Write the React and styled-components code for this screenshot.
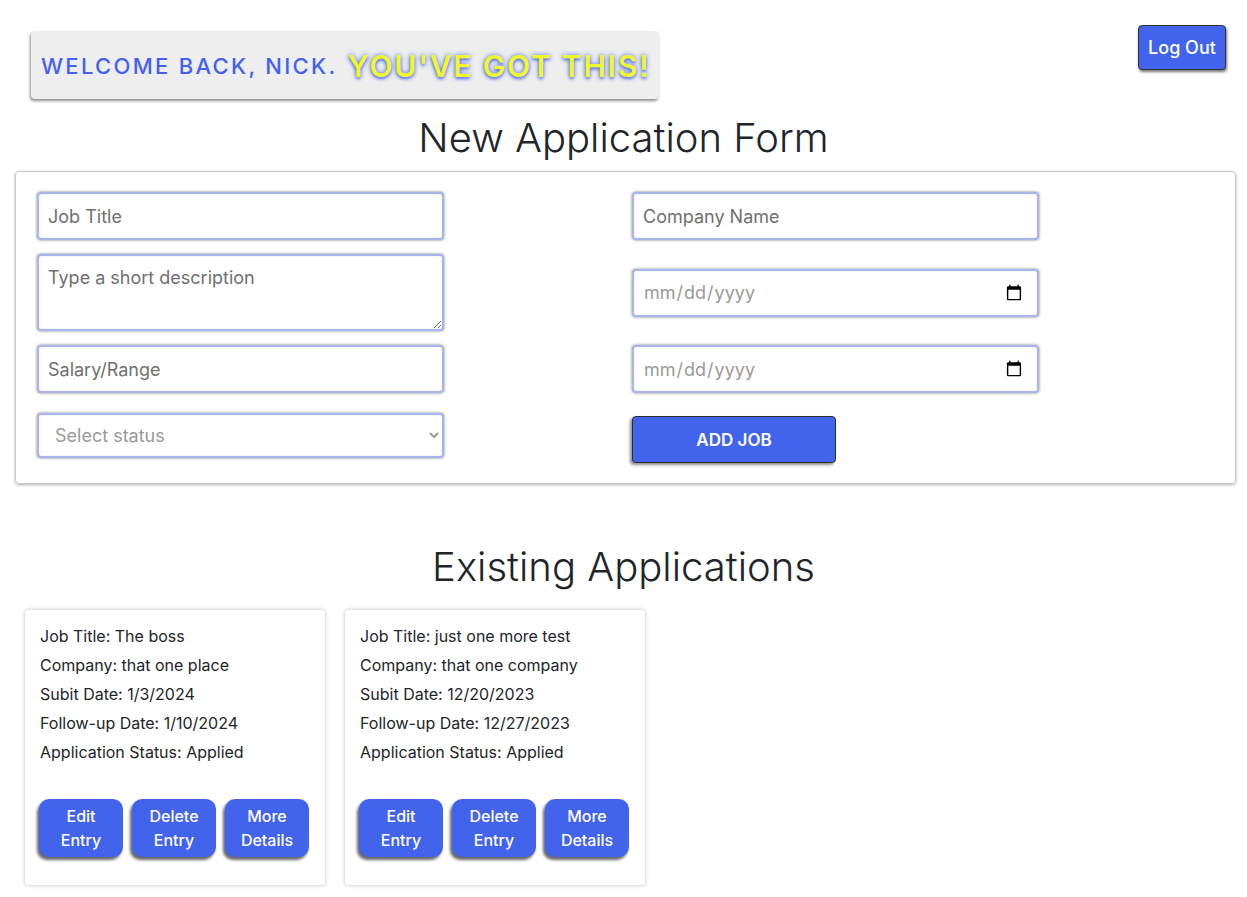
import React from 'react';
import styled, { createGlobalStyle } from 'styled-components';

const GlobalStyle = createGlobalStyle`
  body {
    margin: 0;
    background: #fff;
    font-family: Inter, "Noto Sans", sans-serif;
    color: #212529;
  }
`;

const jobs = [
  {
    title: 'The boss',
    company: 'that one place',
    submit: '1/3/2024',
    followUp: '1/10/2024',
    status: 'Applied',
  },
  {
    title: 'just one more test',
    company: 'that one company',
    submit: '12/20/2023',
    followUp: '12/27/2023',
    status: 'Applied',
  },
];

const App = () => {
  return (
    <Page>
      <GlobalStyle />
      <Header>
        <Welcome>
          <span className="hello">Welcome back, Nick.</span>
          <span className="cheer">You've got this!</span>
        </Welcome>
        <LogOut>Log Out</LogOut>
      </Header>

      <Title>New Application Form</Title>
      <FormCard>
        <Field placeholder="Job Title" />
        <Field placeholder="Company Name" />
        <Area placeholder="Type a short description" />
        <Field type="date" />
        <Field placeholder="Salary/Range" />
        <Field type="date" />
        <Select defaultValue="">
          <option value="" disabled>
            Select status
          </option>
          <option>Applied</option>
          <option>Interviewing</option>
        </Select>
        <AddButton>ADD JOB</AddButton>
      </FormCard>

      <Title $top={59}>Existing Applications</Title>
      <CardList>
        {jobs.map((job) => (
          <JobCard key={job.title}>
            <Line>Job Title: {job.title}</Line>
            <Line>Company: {job.company}</Line>
            <Line>Subit Date: {job.submit}</Line>
            <Line>Follow-up Date: {job.followUp}</Line>
            <Line>Application Status: {job.status}</Line>
            <Actions>
              <ActionButton>Edit Entry</ActionButton>
              <ActionButton>Delete Entry</ActionButton>
              <ActionButton>More Details</ActionButton>
            </Actions>
          </JobCard>
        ))}
      </CardList>
    </Page>
  );
};

const Page = styled.div`
  padding-bottom: 12px;
`;

const Header = styled.header`
  display: flex;
  justify-content: space-between;
  align-items: flex-start;
  padding: 25px 21px 0 31px;
`;

const Welcome = styled.div`
  margin-top: 6px;
  width: 628px;
  height: 68px;
  box-sizing: border-box;
  padding: 2px 10px 0;
  display: flex;
  align-items: center;
  gap: 10px;
  white-space: nowrap;
  background: #eeeeee;
  border-radius: 4px;
  box-shadow: -1px 2px 3px rgba(0, 0, 0, 0.45);
  text-transform: uppercase;

  .hello {
    color: #4361ee;
    font-size: 22px;
    font-weight: 500;
    letter-spacing: 2.3px;
  }

  .cheer {
    color: #f2f72b;
    font-size: 30px;
    font-weight: 600;
    letter-spacing: 1.8px;
    text-shadow: 0 0 5px rgba(67, 97, 238, 0.9), 0 2px 3px rgba(67, 97, 238, 0.7);
  }
`;

const LogOut = styled.button`
  width: 88px;
  height: 45px;
  background: #4263eb;
  color: #fff;
  font-family: inherit;
  font-size: 18px;
  font-weight: 500;
  border: 1px solid #333;
  border-radius: 4px;
  box-shadow: 1px 2px 3px rgba(0, 0, 0, 0.55);
  cursor: pointer;
`;

const Title = styled.h1`
  margin: ${(p) => p.$top || 15}px 0 ${(p) => (p.$top ? 19 : 9)}px;
  text-align: center;
  font-size: 40px;
  font-weight: 300;
  line-height: 48px;
  color: #212529;
`;

const FormCard = styled.form`
  margin: 0 11px 0 15px;
  padding: 20px 21px;
  border: 1px solid #c8c8c8;
  border-radius: 4px;
  box-shadow: 0 1px 3px rgba(0, 0, 0, 0.3);
  display: grid;
  grid-template-columns: 1fr 1fr;
  grid-template-rows: 48px 77px 48px 56px;
  column-gap: 13px;
  row-gap: 14px;
  align-items: center;
`;

const inputBase = `
  width: 407px;
  box-sizing: border-box;
  border: 2px solid #aab5ec;
  border-radius: 4px;
  box-shadow: 0 0 3px rgba(0, 0, 0, 0.5), inset 0 0 2px rgba(0, 0, 0, 0.12);
  font-family: Inter, "Noto Sans", sans-serif;
  font-size: 18px;
  color: #333;
  padding: 0 9px;
  background: #fff;
  outline: none;

  &::placeholder {
    color: #6f6f6f;
  }
`;

const Field = styled.input`
  ${inputBase}
  height: 48px;

  &[type='date'] {
    color: #9a9a9a;
    padding-right: 12px;
  }
`;

const Area = styled.textarea`
  ${inputBase}
  height: 77px;
  padding-top: 11px;
  resize: vertical;
`;

const Select = styled.select`
  ${inputBase}
  height: 45px;
  padding-left: 12px;
  color: #9a9a9a;
`;

const AddButton = styled.button`
  align-self: end;
  width: 204px;
  height: 47px;
  background: #4263eb;
  color: #fff;
  font-family: inherit;
  font-size: 17px;
  font-weight: 600;
  border: 1px solid #2b2b2b;
  border-radius: 4px;
  box-shadow: -2px 2px 3px rgba(0, 0, 0, 0.45);
  cursor: pointer;
`;

const CardList = styled.div`
  display: flex;
  gap: 20px;
  padding-left: 25px;
`;

const JobCard = styled.div`
  width: 300px;
  height: 275px;
  box-sizing: border-box;
  padding: 12px 16px 0 15px;
  background: #fff;
  border-radius: 4px;
  box-shadow: 0 0 4px rgba(0, 0, 0, 0.25);
`;

const Line = styled.p`
  margin: 0;
  font-size: 16px;
  line-height: 29px;
  color: #212529;
`;

const Actions = styled.div`
  display: flex;
  gap: 9px;
  margin: 32px 0 0 -1px;
`;

const ActionButton = styled.button`
  width: 84px;
  height: 58px;
  padding: 0 8px;
  background: #4263eb;
  color: #fff;
  font-family: inherit;
  font-size: 16px;
  font-weight: 500;
  line-height: 24px;
  border: none;
  border-radius: 10px;
  box-shadow: -2px 3px 3px rgba(0, 0, 0, 0.6);
  cursor: pointer;
`;

export default App;
